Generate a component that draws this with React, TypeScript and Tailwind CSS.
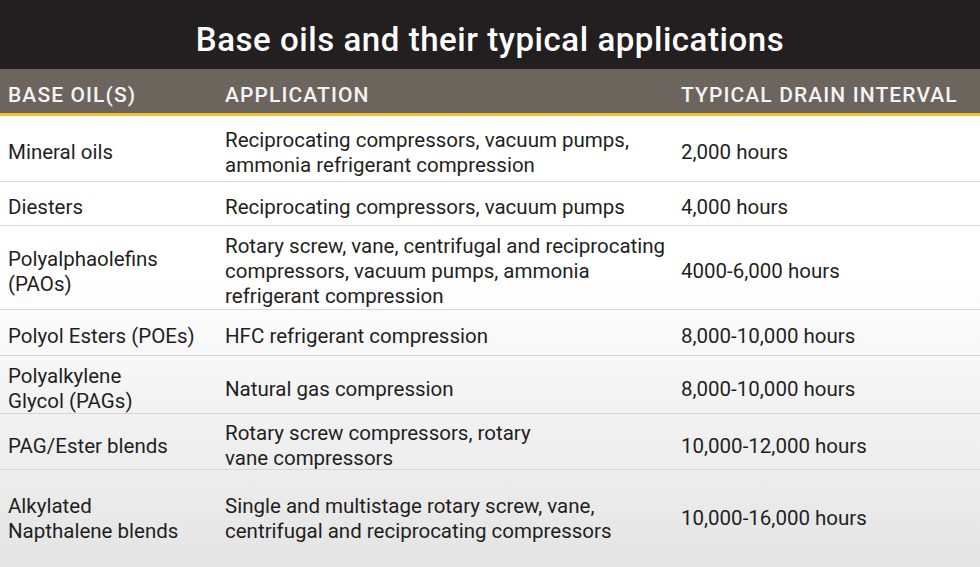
import React from "react";

const rows: { oil: string[]; app: string[]; interval: string; h: string }[] = [
  { oil: ["Mineral oils"], app: ["Reciprocating compressors, vacuum pumps,", "ammonia refrigerant compression"], interval: "2,000 hours", h: "h-[66px] pt-2" },
  { oil: ["Diesters"], app: ["Reciprocating compressors, vacuum pumps"], interval: "4,000 hours", h: "h-[44px] pt-2" },
  { oil: ["Polyalphaolefins", "(PAOs)"], app: ["Rotary screw, vane, centrifugal and reciprocating", "compressors, vacuum pumps, ammonia", "refrigerant compression"], interval: "4000-6,000 hours", h: "h-[84px] pt-2" },
  { oil: ["Polyol Esters (POEs)"], app: ["HFC refrigerant compression"], interval: "8,000-10,000 hours", h: "h-[46px] pt-2" },
  { oil: ["Polyalkylene", "Glycol (PAGs)"], app: ["Natural gas compression"], interval: "8,000-10,000 hours", h: "h-[58px] pt-2" },
  { oil: ["PAG/Ester blends"], app: ["Rotary screw compressors, rotary", "vane compressors"], interval: "10,000-12,000 hours", h: "h-[56px] pt-[7px]" },
  { oil: ["Alkylated", "Napthalene blends"], app: ["Single and multistage rotary screw, vane,", "centrifugal and reciprocating compressors"], interval: "10,000-16,000 hours", h: "h-[97px] pt-0" },
];

function Lines({ lines }: { lines: string[] }) {
  return (
    <div>
      {lines.map((l, i) => (
        <div key={i} className="whitespace-nowrap">{l}</div>
      ))}
    </div>
  );
}

export default function App() {
  return (
    <div className="w-[980px] h-[567px] overflow-hidden font-['Roboto',sans-serif]">
      <div className="h-[69px] bg-[#231f20] flex items-center justify-center pt-[10px]">
        <h1 className="text-white text-[33px] font-medium leading-none tracking-[0.55px]">Base oils and their typical applications</h1>
      </div>
      <div className="h-[44px] bg-[#6b655e] grid grid-cols-[225px_456px_1fr] items-center pt-[10px] text-[#f4f4f4] text-[21px] font-medium tracking-[1.1px] uppercase">
        <div className="pl-2">Base oil(s)</div>
        <div>Application</div>
        <div className="whitespace-nowrap">Typical drain interval</div>
      </div>
      <div className="h-[3px] bg-[#f3c12f]" />
      <div className="bg-linear-to-b from-white from-35% to-[#e4e4e4] text-[#1f1f1f] text-[20.5px] leading-[25px]">
        {rows.map((r, i) => (
          <div
            key={i}
            className={`grid grid-cols-[225px_456px_1fr] items-center ${r.h} ${i < rows.length - 1 ? "border-b border-[#d6d6d6]" : ""}`}
          >
            <div className="pl-2">
              <Lines lines={r.oil} />
            </div>
            <Lines lines={r.app} />
            <div className="whitespace-nowrap">{r.interval}</div>
          </div>
        ))}
      </div>
    </div>
  );
}
